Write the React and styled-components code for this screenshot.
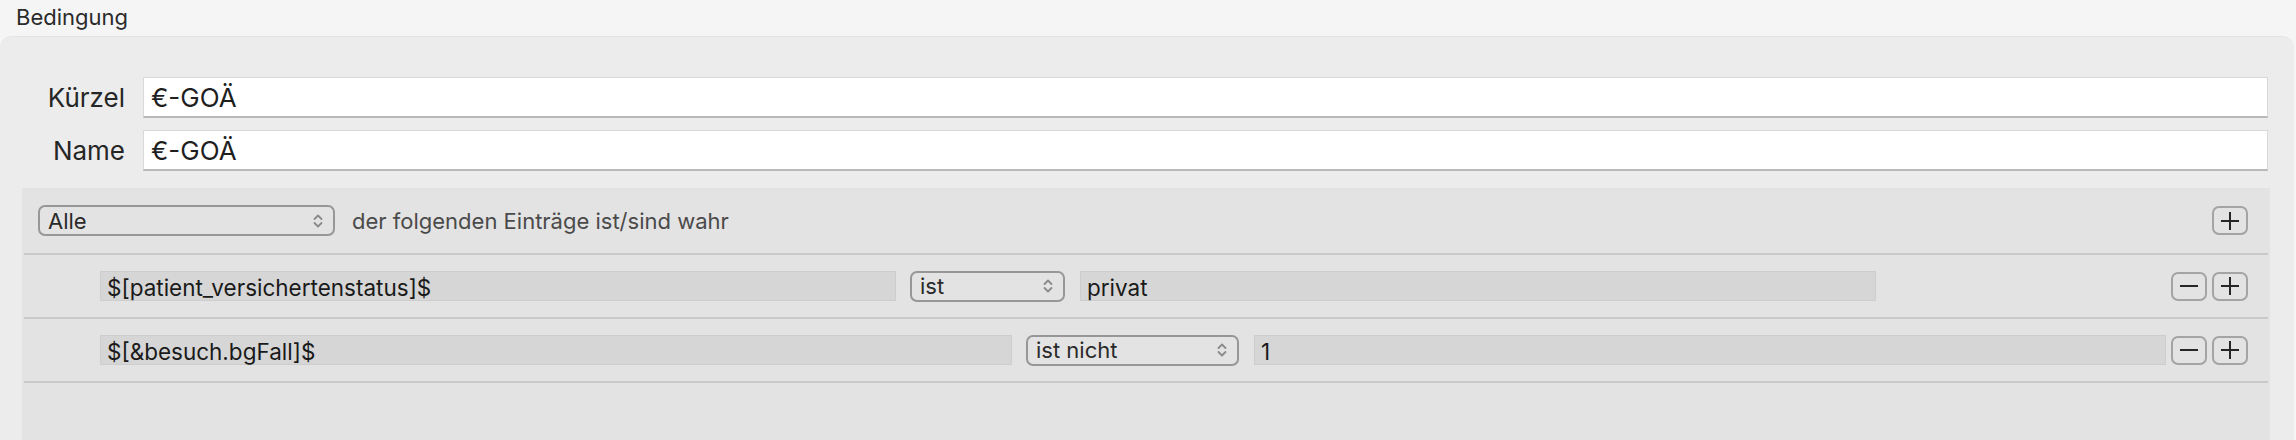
import React from 'react';
import styled, { createGlobalStyle } from 'styled-components';

const GlobalStyle = createGlobalStyle`
  html, body {
    margin: 0;
    padding: 0;
    background: #f5f5f5;
    font-family: Inter, "Noto Sans", "Liberation Sans", sans-serif;
    -webkit-font-smoothing: antialiased;
  }
`;

const Window = styled.div`
  display: flex;
  flex-direction: column;
  width: 2296px;
  height: 440px;
  overflow: hidden;
  background: #f5f5f5;
`;

const TitleBar = styled.div`
  height: 36px;
  flex: none;
  display: flex;
  align-items: center;
  padding-left: 16px;
  font-size: 22px;
  color: #2b2b2b;
  box-sizing: border-box;
  padding-bottom: 3px;
`;

const Panel = styled.div`
  flex: 1;
  display: flex;
  flex-direction: column;
  margin-right: 2px;
  padding: 40px 24px 0 22px;
  background: #ececec;
  border-top: 1px solid #e4e4e4;
  border-radius: 12px 12px 0 0;
  box-sizing: border-box;
`;

const Form = styled.div`
  display: grid;
  grid-template-columns: 103px 1fr;
  column-gap: 18px;
  row-gap: 12px;
  margin-right: 2px;
`;

const Label = styled.label`
  align-self: center;
  text-align: right;
  font-size: 26px;
  color: #262626;
`;

const TextField = styled.div`
  height: 41px;
  box-sizing: border-box;
  display: flex;
  align-items: center;
  padding-left: 7px;
  background: #fff;
  border: 1px solid #d9d9d9;
  border-bottom: 2px solid #b9b9b9;
  font-size: 26px;
  color: #1f1f1f;
`;

const RuleBox = styled.div`
  flex: 1;
  margin-top: 17px;
  display: flex;
  flex-direction: column;
  background: #e3e3e3;
`;

const Row = styled.div`
  height: ${({ $h }) => $h}px;
  flex: none;
  display: flex;
  align-items: center;
  padding: 0 22px 0 ${({ $indent }) => $indent}px;
  box-sizing: border-box;
`;

const Separator = styled.div`
  height: 2px;
  margin: 0 2px;
  background: #c9c9c9;
  flex: none;
`;

const HeaderText = styled.span`
  margin-left: 17px;
  font-size: 22px;
  color: #4a4a4a;
`;

const Spacer = styled.div`
  flex: 1;
`;

const RuleField = styled.div`
  width: ${({ $w }) => $w}px;
  height: 30px;
  flex: none;
  box-sizing: border-box;
  display: flex;
  align-items: center;
  padding-left: 6px;
  padding-top: 2px;
  margin-left: ${({ $ml }) => $ml || 0}px;
  background: #d6d6d6;
  border: 1px solid #cdcdcd;
  font-size: 22.5px;
  color: #1a1a1a;
`;

const Popup = styled.div`
  width: ${({ $w }) => $w}px;
  height: 31px;
  flex: none;
  box-sizing: border-box;
  display: flex;
  align-items: center;
  justify-content: space-between;
  padding: 0 10px 0 8px;
  margin-left: ${({ $ml }) => $ml || 0}px;
  border: 2px solid #979797;
  border-radius: 7px;
  font-size: 22px;
  color: #2a2a2a;
`;

const ButtonPair = styled.div`
  display: flex;
  gap: 5px;
  margin-left: auto;
`;

const SquareButton = styled.button`
  width: 36px;
  height: 29px;
  box-sizing: border-box;
  display: flex;
  align-items: center;
  justify-content: center;
  padding: 0;
  background: transparent;
  border: 2px solid #a4a4a4;
  border-radius: 7px;
`;

const Chevrons = () => (
  <svg width="10" height="16" viewBox="0 0 10 16" fill="none">
    <path d="M1.5 6 L5 2.5 L8.5 6" stroke="#8a8a8a" strokeWidth="1.8" strokeLinecap="round" strokeLinejoin="round" />
    <path d="M1.5 10 L5 13.5 L8.5 10" stroke="#8a8a8a" strokeWidth="1.8" strokeLinecap="round" strokeLinejoin="round" />
  </svg>
);

const PlusIcon = () => (
  <svg width="20" height="20" viewBox="0 0 20 20">
    <path d="M1 10 H19 M10 1 V19" stroke="#262626" strokeWidth="2" />
  </svg>
);

const MinusIcon = () => (
  <svg width="20" height="20" viewBox="0 0 20 20">
    <path d="M1 10 H19" stroke="#262626" strokeWidth="2" />
  </svg>
);

const rules = [
  {
    key: '$[patient_versichertenstatus]$',
    keyWidth: 796,
    op: 'ist',
    opWidth: 155,
    value: 'privat',
    valueWidth: 796,
  },
  {
    key: '$[&besuch.bgFall]$',
    keyWidth: 912,
    op: 'ist nicht',
    opWidth: 213,
    value: '1',
    valueWidth: 912,
  },
];

const App = () => (
  <>
    <GlobalStyle />
    <Window>
      <TitleBar>Bedingung</TitleBar>
      <Panel>
        <Form>
          <Label>Kürzel</Label>
          <TextField>€-GOÄ</TextField>
          <Label>Name</Label>
          <TextField>€-GOÄ</TextField>
        </Form>

        <RuleBox>
          <Row $h={65} $indent={16}>
            <Popup $w={297}>
              Alle
              <Chevrons />
            </Popup>
            <HeaderText>der folgenden Einträge ist/sind wahr</HeaderText>
            <Spacer />
            <SquareButton>
              <PlusIcon />
            </SquareButton>
          </Row>
          <Separator />
          {rules.map(r => (
            <React.Fragment key={r.key}>
              <Row $h={62} $indent={78}>
                <RuleField $w={r.keyWidth}>{r.key}</RuleField>
                <Popup $w={r.opWidth} $ml={14}>
                  {r.op}
                  <Chevrons />
                </Popup>
                <RuleField $w={r.valueWidth} $ml={15}>
                  {r.value}
                </RuleField>
                <ButtonPair>
                  <SquareButton>
                    <MinusIcon />
                  </SquareButton>
                  <SquareButton>
                    <PlusIcon />
                  </SquareButton>
                </ButtonPair>
              </Row>
              <Separator />
            </React.Fragment>
          ))}
        </RuleBox>
      </Panel>
    </Window>
  </>
);

export default App;
